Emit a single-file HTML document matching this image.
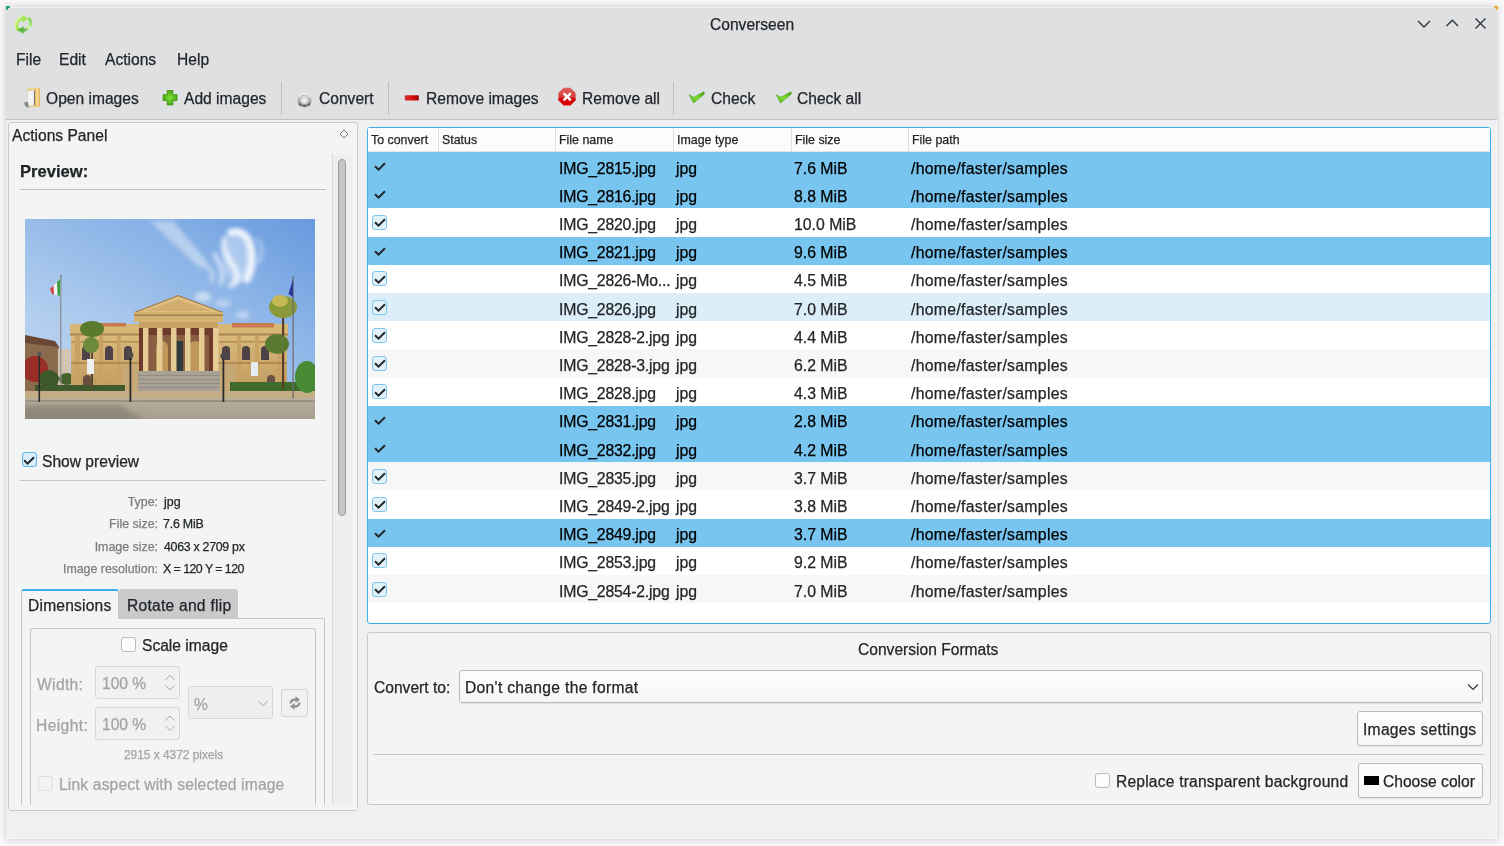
<!DOCTYPE html>
<html><head><meta charset="utf-8">
<style>
*{box-sizing:border-box;margin:0;padding:0}
html,body{width:1504px;height:846px;overflow:hidden;-webkit-font-smoothing:antialiased;-webkit-text-stroke:0.25px currentColor;background:#f8f8f8;font-family:"Liberation Sans",sans-serif;color:#232629}
.a{position:absolute;white-space:pre;line-height:1}
#win{position:absolute;left:6px;top:7px;width:1491px;height:832px;background:#eff0f1;box-shadow:0 0 6px 1px rgba(0,0,0,.15),inset -1px -1px 0 #f5f6f7}
#hdr{position:absolute;left:6px;top:7px;width:1491px;height:113px;background:#dee0e2;border-bottom:1px solid #bfc1c3;box-shadow:inset 0 1px 0 #eceef0}
.m{font-size:15.6px}
.vsep{position:absolute;width:1px;background:#bcbec0}
.frame{position:absolute;border:1px solid #c8c9cb;border-radius:3px;background:#f3f4f4}
.row{position:absolute;left:368px;width:1122px;height:28.2px}
.c{position:absolute;top:2.5px;font-size:15.8px;line-height:28.2px;white-space:pre}
.sel{background:#78c5ef}
.sel .c{color:#000}
.alt{background:#f7f7f7}
.hov{background:#dceef9}
.hc{position:absolute;top:128px;height:24px;font-size:12.4px;line-height:25px;padding-left:3px;border-right:1px solid #dfe0e1;white-space:pre}
.lbl{position:absolute;font-size:12.4px;color:#7b7d7f;text-align:right;width:140px;left:18px;line-height:1;white-space:pre}
.val{position:absolute;font-size:12.4px;left:164px;line-height:1;white-space:pre}
.dis{color:#a2a4a6}
.cbx{position:absolute;width:15px;height:15px;border:1px solid #b9bbbd;border-radius:3px;background:#fcfcfc}
.cbx.on{border-color:#5ab6ea;background:#d9eefa}

.cbx.dcb{border-color:#dcdddf;background:#f1f2f2}
.spin{position:absolute;width:85px;height:33px;border:1px solid #d6d7d9;border-radius:3px;background:#f0f1f1}
.spin span{position:absolute;left:6px;top:9px;font-size:15.6px;color:#a2a4a6;line-height:1}
.dcombo{position:absolute;width:85px;height:33px;border:1px solid #d6d7d9;border-radius:3px;background:#eeefef}
.dcombo span{position:absolute;left:5px;top:10px;font-size:15.6px;color:#a2a4a6;line-height:1}
.combo{position:absolute;border:1px solid #b9bbbd;border-radius:3px;background:linear-gradient(#fdfdfd,#f5f6f6);box-shadow:0 1px 1px rgba(0,0,0,.08)}
.combo span{position:absolute;left:5px;top:9px;font-size:15.6px;line-height:1;white-space:pre}
.btn{position:absolute;border:1px solid #b9bbbd;border-radius:3px;background:linear-gradient(#fdfdfd,#f5f6f6);box-shadow:0 1px 1px rgba(0,0,0,.08)}
.btn span{position:absolute;top:10px;font-size:15.6px;line-height:1;white-space:pre}
.cb{position:absolute;left:4px;top:6.5px;width:15px;height:15px;border:1px solid #7fc6ee;border-radius:3px;background:#e1f1fa}
.ck{position:absolute;left:4px;top:6px}
</style></head><body><div id="root" style="position:absolute;left:0;top:0;width:1504px;height:846px;will-change:transform">
<div id="win"></div>
<div id="hdr"></div>
<div style="position:absolute;left:6px;top:6px;width:4px;height:2px;background:#1c9c7c;border-radius:1px"></div>
<div style="position:absolute;left:6px;top:6px;width:2px;height:4px;background:#1c9c7c;border-radius:1px"></div>
<div style="position:absolute;left:1494px;top:6px;width:4px;height:2px;background:#e2b23a;border-radius:1px"></div>
<div style="position:absolute;left:1496px;top:6px;width:2px;height:4px;background:#e2b23a;border-radius:1px"></div>

<!-- title -->
<div class="a m" style="left:710px;top:17px">Converseen</div>
<!-- menu -->
<div class="a m" style="left:16px;top:52px">File</div>
<div class="a m" style="left:59px;top:52px">Edit</div>
<div class="a m" style="left:105px;top:52px">Actions</div>
<div class="a m" style="left:177px;top:52px">Help</div>
<!-- toolbar -->
<div class="a m" style="left:46px;top:91px">Open images</div>
<div class="a m" style="left:184px;top:91px">Add images</div>
<div class="vsep" style="left:281px;top:82px;height:33px"></div>
<div class="a m" style="left:319px;top:91px">Convert</div>
<div class="vsep" style="left:388px;top:82px;height:33px"></div>
<div class="a m" style="left:426px;top:91px">Remove images</div>
<div class="a m" style="left:582px;top:91px">Remove all</div>
<div class="vsep" style="left:673px;top:82px;height:33px"></div>
<div class="a m" style="left:711px;top:91px">Check</div>
<div class="a m" style="left:797px;top:91px">Check all</div>


<!-- icons -->
<svg class="a" style="left:12px;top:13px" width="22" height="22" viewBox="0 0 22 22">
 <defs><linearGradient id="ga" x1="0" y1="0" x2="1" y2="1"><stop offset="0" stop-color="#e4ffa0"/><stop offset=".45" stop-color="#a8ec50"/><stop offset="1" stop-color="#4ea82c"/></linearGradient>
 <linearGradient id="gb" x1="1" y1="0" x2="0" y2="1"><stop offset="0" stop-color="#78cc48"/><stop offset=".5" stop-color="#d8fcb0"/><stop offset="1" stop-color="#4a9a2a"/></linearGradient></defs>
 <path d="M7 17.5C3.5 14 3.5 8.5 8 6.2 9.2 5.6 10.2 5.4 11.5 5.4" fill="none" stroke="url(#ga)" stroke-width="3.2"/>
 <path d="M10.5 1.8 16 5.8 10.5 9.8Z" fill="#a8e858"/>
 <path d="M16.5 5C19.5 8.5 19 14 14.5 16.2 13 16.8 12 17 10.5 17" fill="none" stroke="url(#gb)" stroke-width="3.2"/>
 <path d="M11.5 13 6 17 11.5 21Z" fill="#5cb83a"/>
 <path d="M7 17.5C3.5 14 3.5 8.5 8 6.2" fill="none" stroke="#3c6a2a" stroke-opacity=".35" stroke-width=".6" transform="translate(.9 .4)"/>
</svg>
<svg class="a" style="left:22px;top:87px" width="20" height="22" viewBox="0 0 20 22">
 <defs><linearGradient id="gf" x1="0" y1="0" x2="1" y2="0"><stop offset="0" stop-color="#e9b34f"/><stop offset=".5" stop-color="#fbe0a0"/><stop offset="1" stop-color="#dba849"/></linearGradient></defs>
 <path d="M5 1.5 17.5 .8 17.5 19.5 5 20.5Z" fill="#efd08a"/>
 <path d="M5.5 4 12 3.2 12 18.5 5.5 19Z" fill="#f4f4f4" stroke="#c8c8c8" stroke-width=".5"/>
 <path d="M12 3.2 13.5 3.5 13.5 18 12 18.5Z" fill="#7a7a7a"/>
 <path d="M13 2 17.8 1 17.8 19.5 13 20.5Z" fill="url(#gf)"/>
 <path d="M2.5 15C2 17.5 3 20 6 20.5L7 20.5 6 15Z" fill="#8a8c8e"/>
</svg>
<svg class="a" style="left:162px;top:89px" width="17" height="17" viewBox="0 0 17 17">
 <defs><radialGradient id="gp" cx=".5" cy=".5" r=".6"><stop offset="0" stop-color="#80e040"/><stop offset="1" stop-color="#3d9c05"/></radialGradient></defs>
 <path d="M5.2 1.5H10.9V5.7H15V11.6H10.9V15.9H5.2V11.6H1.1V5.7H5.2Z" fill="url(#gp)" stroke="#3f8f17" stroke-width=".8" stroke-linejoin="round"/>
</svg>
<svg class="a" style="left:296px;top:92px" width="17" height="16" viewBox="0 0 17 16">
 <defs><linearGradient id="gg" x1="0" y1="0" x2="0" y2="1"><stop offset="0" stop-color="#f5f5f5"/><stop offset="1" stop-color="#6f7173"/></linearGradient></defs>
 <circle cx="8.5" cy="8" r="7.2" fill="url(#gg)"/>
 <circle cx="8.5" cy="8" r="4.6" fill="#d8d9da" stroke="#a0a2a4" stroke-width=".8"/>
 <circle cx="8.5" cy="8.3" r="2" fill="#f2f2f2"/>
 <g fill="#e9e9e9" opacity=".9"><circle cx="4" cy="4" r="1.2"/><circle cx="8.5" cy="2.2" r="1.2"/><circle cx="13" cy="4" r="1.2"/></g>
 <g fill="#606264"><circle cx="4" cy="12.5" r="1.3"/><circle cx="8.5" cy="14" r="1.3"/><circle cx="13" cy="12.5" r="1.3"/></g>
</svg>
<svg class="a" style="left:404px;top:94px" width="16" height="8" viewBox="0 0 16 8">
 <defs><linearGradient id="gm" x1="0" y1="0" x2="1" y2="0"><stop offset="0" stop-color="#c83030"/><stop offset=".5" stop-color="#e01010"/><stop offset="1" stop-color="#9a0000"/></linearGradient></defs>
 <rect x=".8" y="1.2" width="14" height="5.2" rx=".8" fill="url(#gm)"/>
</svg>
<svg class="a" style="left:557px;top:87px" width="20" height="20" viewBox="0 0 20 20">
 <defs><linearGradient id="gs" x1="0" y1="0" x2="0" y2="1"><stop offset="0" stop-color="#e06060"/><stop offset=".55" stop-color="#d43a3a"/><stop offset=".6" stop-color="#cc0000"/><stop offset="1" stop-color="#e00000"/></linearGradient></defs>
 <path d="M6.6 .8H13.4L18.6 6V13.2L13.4 18.4H6.6L1.4 13.2V6Z" fill="url(#gs)"/>
 <path d="M7.3 6.8 13.1 12.6M13.1 6.8 7.3 12.6" stroke="#fff" stroke-width="2.6" stroke-linecap="round"/>
</svg>
<svg class="a" style="left:688px;top:91px" width="18" height="14" viewBox="0 0 18 14">
 <defs><linearGradient id="gc" x1="0" y1="1" x2="1" y2="0"><stop offset="0" stop-color="#4caa10"/><stop offset=".5" stop-color="#7ee030"/><stop offset="1" stop-color="#3f9a08"/></linearGradient></defs>
 <path d="M1.2 3.8 6 6.2 15.8 .8C16.6 1.6 16.6 2.8 15.8 3.6L5.5 12 1.2 3.8Z" fill="url(#gc)" stroke="#4a9a20" stroke-width=".5"/>
</svg>
<svg class="a" style="left:775px;top:91px" width="18" height="14" viewBox="0 0 18 14">
 <path d="M1.2 3.8 6 6.2 15.8 .8C16.6 1.6 16.6 2.8 15.8 3.6L5.5 12 1.2 3.8Z" fill="url(#gc)" stroke="#4a9a20" stroke-width=".5"/>
</svg>
<!-- title buttons -->
<svg class="a" style="left:1410px;top:12px" width="84" height="24" viewBox="0 0 84 24">
 <path d="M8 9 14 15 20 9" fill="none" stroke="#31363b" stroke-width="1.4"/>
 <path d="M36.5 14 42.3 8.2 48 14" fill="none" stroke="#31363b" stroke-width="1.4"/>
 <path d="M65.5 6.5 75.5 16.5M75.5 6.5 65.5 16.5" fill="none" stroke="#31363b" stroke-width="1.4"/>
</svg>

<!-- dock -->
<div class="frame" style="left:8px;top:122px;width:350px;height:689px"></div>
<div class="a m" style="left:12px;top:128px">Actions Panel</div>

<!-- dock contents -->
<svg class="a" style="left:339px;top:129px" width="10" height="10" viewBox="0 0 10 10"><path d="M5 1 9 5 5 9 1 5Z" fill="none" stroke="#75787b" stroke-width="1"/></svg>
<div class="a" style="left:20px;top:164px;font-size:16.6px;font-weight:bold;color:#1f2225">Preview:</div>
<div style="position:absolute;left:20px;top:189px;width:306px;height:1px;background:#bfc1c3"></div>
<div id="prev" style="position:absolute;left:25px;top:219px;width:290px;height:200px;background:#7fa7dc;overflow:hidden"><svg width="290" height="200" viewBox="0 0 290 200" style="position:absolute;left:0;top:0">
<defs>
 <linearGradient id="sky" x1="0" y1="1" x2="1" y2="0">
  <stop offset="0" stop-color="#c6dbf1"/><stop offset=".4" stop-color="#a9c8ed"/><stop offset=".7" stop-color="#8cb4e7"/><stop offset="1" stop-color="#6699de"/>
 </linearGradient>
 <linearGradient id="skyt" x1="0" y1="0" x2="0" y2="1">
  <stop offset="0" stop-color="#6d9fe0" stop-opacity=".15"/><stop offset=".5" stop-color="#6d9fdd" stop-opacity="0"/>
 </linearGradient>
 <linearGradient id="bld" x1="0" y1="0" x2="0" y2="1">
  <stop offset="0" stop-color="#dcbd80"/><stop offset="1" stop-color="#c09a5e"/>
 </linearGradient>
 <linearGradient id="pave" x1="0" y1="0" x2="0" y2="1">
  <stop offset="0" stop-color="#b9ae9c"/><stop offset="1" stop-color="#a89e8e"/>
 </linearGradient>
 <filter id="bl"><feGaussianBlur stdDeviation="2.2"/></filter>
 <filter id="bl1"><feGaussianBlur stdDeviation=".7"/></filter>
 <filter id="bl3"><feGaussianBlur stdDeviation="2.3"/></filter>
 <filter id="bl2"><feGaussianBlur stdDeviation="3"/></filter>
</defs>
<rect width="290" height="200" fill="url(#sky)"/>
<rect width="290" height="200" fill="url(#skyt)"/>
<!-- clouds -->
<g filter="url(#bl3)" fill="none" stroke="#fff" stroke-linecap="round">
 <path d="M206 14 C216 10 224 18 226 30 C228 42 226 52 222 60" stroke-width="8" opacity=".85"/>
 <path d="M200 20 C196 30 204 40 210 50 C214 58 212 64 206 66" stroke-width="6" opacity=".7"/>
 <path d="M190 36 C196 46 200 56 196 64" stroke-width="5" opacity=".55"/>
 <path d="M232 20 C238 26 238 34 234 44" stroke-width="3" opacity=".45"/>
 <path d="M180 46 C186 50 190 56 186 62" stroke-width="4" opacity=".45"/>
</g>
<g filter="url(#bl)" fill="#fff">
 <path d="M125 2 L148 2 L182 42 L176 50 Z" opacity=".4"/>
 <ellipse cx="212" cy="40" rx="14" ry="24" opacity=".35"/>
 <ellipse cx="178" cy="78" rx="8" ry="5" opacity=".5"/>
 <ellipse cx="198" cy="84" rx="8" ry="4" opacity=".35"/>
 <ellipse cx="218" cy="96" rx="7" ry="4" opacity=".4"/>
</g>
<!-- left building -->
<path d="M0 118 L30 124 L34 128 L34 172 L0 172Z" fill="#8c6a4e"/>
<path d="M0 116 L30 122 L34 128 L0 124Z" fill="#6a4634"/>
<rect x="33" y="130" width="12" height="40" fill="#d2c6b2"/>
<g filter="url(#bl1)">
 <ellipse cx="10" cy="150" rx="13" ry="13" fill="#9a2e28"/>
 <ellipse cx="24" cy="160" rx="10" ry="9" fill="#3d5a2a"/>
 <ellipse cx="42" cy="160" rx="8" ry="6" fill="#47602e"/>
</g>
<!-- flag pole left + flag -->
<rect x="35.2" y="56" width="1.2" height="127" fill="#8a8a8a"/>
<path d="M25 70 L35.2 60 L35.2 77 L27 75Z" fill="#f4f4f4"/>
<path d="M32 63 L35.2 60 L35.2 77 L32.5 76.5Z" fill="#3aa04a"/>
<path d="M25 70 L28.5 66.5 L29 75.8 L27 75Z" fill="#d04040"/>
<!-- main building body -->
<rect x="46" y="110" width="216" height="62" fill="url(#bld)"/>
<rect x="45" y="105" width="70" height="11" fill="#d8b776"/>
<rect x="193" y="105" width="70" height="11" fill="#d8b776"/>
<rect x="73" y="104" width="28" height="3.5" fill="#c67a52"/>
<rect x="207" y="104" width="42" height="4.5" fill="#c97a50"/>
<rect x="45" y="114.5" width="218" height="2" fill="#a88450"/>
<rect x="46" y="122" width="216" height="1.5" fill="#b38c55"/>
<g fill="#c8a264"><rect x="50" y="117" width="5" height="54"/><rect x="74" y="117" width="4" height="54"/><rect x="92" y="117" width="4" height="54"/><rect x="212" y="117" width="4" height="54"/><rect x="230" y="117" width="4" height="54"/><rect x="252" y="117" width="5" height="54"/></g>
<!-- windows arched -->
<g fill="#4e4248">
 <path d="M57 141V131a4 4 0 0 1 8 0V141Z"/>
 <path d="M80 141V131a4 4 0 0 1 8 0V141Z"/>
 <path d="M99 141V131a4 4 0 0 1 8 0V141Z"/>
 <path d="M197 141V131a4 4 0 0 1 8 0V141Z"/>
 <path d="M217 141V131a4 4 0 0 1 8 0V141Z"/>
 <path d="M236 141V131a4 4 0 0 1 8 0V141Z"/>
</g>
<g fill="#6a5040">
 <path d="M58 170V160a4 4 0 0 1 8 0V170Z"/>
 <path d="M242 170V160a4 4 0 0 1 8 0V170Z"/>
</g>
<rect x="46" y="143" width="216" height="2" fill="#b08a52"/>
<!-- portico -->
<path d="M109.5 93.5 L153.3 76.5 L198 93.5Z" fill="#dfbf80" stroke="#9c7644" stroke-width="1.1"/>
<path d="M120 92 L153.3 80.5 L187 92Z" fill="#d2ae6e"/>
<rect x="109" y="93" width="89" height="10" fill="#d4b272"/>
<rect x="109" y="95.5" width="89" height="1.2" fill="#94704a"/>
<rect x="114" y="103" width="79" height="6" fill="#c6a266"/>
<rect x="114" y="109" width="79" height="43" fill="#6e3a2c"/>
<rect x="124" y="116" width="60" height="36" fill="#8a5e40"/>
<path d="M131 152V128a6 6 0 0 1 12 0V152Z" fill="#c0965a"/>
<path d="M164 152V128a6 6 0 0 1 12 0V152Z" fill="#c0965a"/>
<rect x="149" y="122" width="9" height="30" fill="#2e3a3c"/>
<g fill="#e4cc94">
 <rect x="118" y="109" width="5.5" height="44"/>
 <rect x="132" y="109" width="5.5" height="44"/>
 <rect x="146" y="109" width="5.5" height="44"/>
 <rect x="160" y="109" width="5.5" height="44"/>
 <rect x="174" y="109" width="5.5" height="44"/>
 <rect x="188" y="109" width="5.5" height="44"/>
</g>
<!-- stairs -->
<rect x="111" y="152" width="86" height="20" fill="#a9a196"/>
<g fill="#8f887e"><rect x="111" y="156" width="86" height=".8"/><rect x="111" y="160" width="86" height=".8"/><rect x="111" y="164" width="86" height=".8"/><rect x="111" y="168" width="86" height=".8"/></g>
<rect x="97" y="145" width="16" height="27" fill="#c6a874"/>
<rect x="195" y="145" width="16" height="27" fill="#c6a874"/>
<!-- hedges -->
<rect x="10" y="166" width="90" height="6" fill="#3f5a2c"/>
<rect x="205" y="163" width="85" height="9" fill="#3f6a2c"/>
<!-- base wall -->
<rect x="0" y="172" width="290" height="7" fill="#c4ae86"/>
<!-- pavement -->
<rect x="0" y="179" width="290" height="21" fill="url(#pave)"/>
<rect x="0" y="181.5" width="290" height="1" fill="#80786c"/>
<g filter="url(#bl2)"><path d="M-5 186 L95 186 L125 205 L-5 205Z" fill="#857d72" opacity=".75"/></g>
<!-- palms left -->
<rect x="66" y="112" width="2" height="58" fill="#5a4a30"/>
<g filter="url(#bl1)">
 <ellipse cx="67" cy="110" rx="12" ry="8" fill="#5a7a2e"/>
 <ellipse cx="66" cy="126" rx="8" ry="8" fill="#6c8a3a"/>
</g>
<rect x="36" y="56" width="1" height="3" fill="#8a8a8a"/>
<!-- lamp posts -->
<rect x="13.5" y="135" width="1.6" height="48" fill="#2a2a2a"/>
<circle cx="14.3" cy="135" r="2.2" fill="#555"/>
<rect x="104.5" y="136" width="1.8" height="47" fill="#2a2a2a"/>
<circle cx="105.4" cy="136" r="3" fill="#4a4a4a"/>
<rect x="197.5" y="137" width="1.8" height="46" fill="#2a2a2a"/>
<circle cx="198.4" cy="137" r="3" fill="#4a4a4a"/>
<!-- banners -->
<rect x="62" y="140" width="7" height="15" fill="#f0f0f0"/>
<rect x="226" y="143" width="7" height="14" fill="#e4ecf2"/>
<!-- right palms -->
<rect x="257" y="95" width="2.2" height="75" fill="#5a4028"/>
<g filter="url(#bl1)">
 <ellipse cx="258" cy="88" rx="14" ry="11" fill="#8a9a3a"/>
 <ellipse cx="255" cy="82" rx="8" ry="6" fill="#c4ba52"/>
 <ellipse cx="252" cy="125" rx="12" ry="10" fill="#5a7a30"/>
</g>
<rect x="267.5" y="57" width="1.2" height="123" fill="#6a6a6a"/>
<path d="M268 60 L263.5 75 L268 78Z" fill="#2a3a9a"/>
<g filter="url(#bl1)">
 <ellipse cx="282" cy="158" rx="12" ry="16" fill="#4a8a34"/>
</g>
</svg>
</div>
<div class="cbx on" style="left:22px;top:452px"></div><svg class="a" style="left:21px;top:452px" width="16" height="16" viewBox="0 0 16 16"><path d="M3.2 8.2 6.6 11.6 13 5.2" fill="none" stroke="#232629" stroke-width="2"/></svg>
<div class="a m" style="left:42px;top:454px">Show preview</div>
<div style="position:absolute;left:20px;top:480px;width:306px;height:1px;background:#c4c6c8"></div>
<div class="lbl" style="top:496px">Type:</div><div class="val" style="top:496px">jpg</div>
<div class="lbl" style="top:518px">File size:</div><div class="val" style="top:518px;left:163px;letter-spacing:-.2px">7.6 MiB</div>
<div class="lbl" style="top:541px">Image size:</div><div class="val" style="top:541px;letter-spacing:-.3px">4063 x 2709 px</div>
<div class="lbl" style="top:563px">Image resolution:</div><div class="val" style="top:563px;left:163px;letter-spacing:-.55px">X = 120 Y = 120</div>
<!-- scrollbar -->
<div style="position:absolute;left:332px;top:154px;width:20px;height:651px;background:#eeeff0;border-left:1px solid #d9dadb"></div>
<div style="position:absolute;left:338px;top:159px;width:8px;height:357px;border-radius:4px;background:#c5c6c7;border:1px solid #9a9c9e"></div>
<!-- tabs -->
<div style="position:absolute;left:21px;top:618px;width:304px;height:187px;border:1px solid #c4c6c8;border-bottom:0;border-radius:2px 2px 0 0"></div>
<div style="position:absolute;left:119px;top:589px;width:119px;height:29px;background:#c9cacc;border-radius:3px 3px 0 0"></div>
<div style="position:absolute;left:21px;top:589px;width:98px;height:30px;background:#f3f4f4;border:1px solid #c4c6c8;border-bottom:0;border-top:2px solid #3daee9;border-radius:3px 3px 0 0"></div>
<div class="a m" style="left:28px;top:598px;letter-spacing:.2px">Dimensions</div>
<div class="a m" style="left:127px;top:598px;letter-spacing:.25px">Rotate and flip</div>
<div style="position:absolute;left:30px;top:628px;width:286px;height:177px;border:1px solid #c4c6c8;border-bottom:0;border-radius:3px 3px 0 0"></div>
<div class="cbx" style="left:121px;top:637px"></div>
<div class="a m" style="left:142px;top:638px">Scale image</div>
<div class="a m dis" style="left:37px;top:677px;letter-spacing:.35px">Width:</div>
<div class="a m dis" style="left:36px;top:718px;letter-spacing:.4px">Height:</div>
<div class="spin" style="left:95px;top:666px"><span>100 %</span></div>
<div class="spin" style="left:95px;top:707px"><span>100 %</span></div>
<div class="dcombo" style="left:188px;top:686px"><span>%</span></div>
<div style="position:absolute;left:281px;top:689px;width:27px;height:28px;border:1px solid #d3d4d6;border-radius:3px;background:#f0f1f1"></div>
<div class="a dis" style="left:124px;top:750px;font-size:11.9px">2915 x 4372 pixels</div>
<div class="cbx dcb" style="left:38px;top:776px"></div>
<div class="a m dis" style="left:59px;top:777px;letter-spacing:.17px">Link aspect with selected image</div>

<!-- spin arrows, chevrons, swap -->
<svg class="a" style="left:160px;top:666px" width="20" height="76" viewBox="0 0 20 76">
 <g fill="none" stroke="#a6a8aa" stroke-width="1">
  <path d="M5.5 13.8 10 9.2 14.5 13.8"/><path d="M5.5 19.5 10 24 14.5 19.5"/>
  <path d="M5.5 54.5 10 50 14.5 54.5"/><path d="M5.5 60 10 64.5 14.5 60"/>
 </g>
</svg>
<svg class="a" style="left:256px;top:698px" width="14" height="10" viewBox="0 0 14 10"><path d="M2.5 3 7 7.8 11.5 3" fill="none" stroke="#a6a8aa" stroke-width="1"/></svg>
<svg class="a" style="left:287px;top:695px" width="16" height="16" viewBox="0 0 16 16">
 <g fill="#8f9193">
  <path d="M2.5 8.5C2.5 5 5 3.2 8.5 3.4L8.5 1.2 13 4.6 8.5 8 8.5 5.8C6.2 5.6 4.6 6.8 4.6 8.5Z"/>
  <path d="M13.5 7.5C13.5 11 11 12.8 7.5 12.6L7.5 14.8 3 11.4 7.5 8 7.5 10.2C9.8 10.4 11.4 9.2 11.4 7.5Z"/>
 </g>
</svg>
<!-- cover below scroll area -->
<div style="position:absolute;left:9px;top:805px;width:348px;height:5px;background:#f3f4f4"></div>


<!-- table -->
<div style="position:absolute;left:367px;top:127px;width:1124px;height:497px;border:1px solid #3daee9;border-radius:3px;background:#fff;overflow:hidden">
</div>
<div style="position:absolute;left:368px;top:128px;width:1122px;height:24px;background:#fcfcfc;border-bottom:1px solid #e3e4e5"></div>
<div class="hc" style="left:368px;width:71px">To convert</div>
<div class="hc" style="left:439px;width:117px">Status</div>
<div class="hc" style="left:556px;width:118px">File name</div>
<div class="hc" style="left:674px;width:118px">Image type</div>
<div class="hc" style="left:792px;width:117px">File size</div>
<div class="hc" style="left:909px;width:581px;border-right:0">File path</div>
<div class="row sel" style="top:152.0px"><svg class="ck" width="16" height="16" viewBox="0 0 16 16"><path d="M3 8.2 6.5 11.6 13 5.2" fill="none" stroke="#232629" stroke-width="2"/></svg><span class="c" style="left:191px;letter-spacing:-.2px">IMG_2815.jpg</span><span class="c" style="left:308px">jpg</span><span class="c" style="left:426px">7.6 MiB</span><span class="c" style="left:543px;letter-spacing:.3px">/home/faster/samples</span></div>
<div class="row sel" style="top:180.2px"><svg class="ck" width="16" height="16" viewBox="0 0 16 16"><path d="M3 8.2 6.5 11.6 13 5.2" fill="none" stroke="#232629" stroke-width="2"/></svg><span class="c" style="left:191px;letter-spacing:-.2px">IMG_2816.jpg</span><span class="c" style="left:308px">jpg</span><span class="c" style="left:426px">8.8 MiB</span><span class="c" style="left:543px;letter-spacing:.3px">/home/faster/samples</span></div>
<div class="row " style="top:208.4px"><span class="cb"></span><svg class="ck" width="16" height="16" viewBox="0 0 16 16"><path d="M3 8.2 6.5 11.6 13 5.2" fill="none" stroke="#232629" stroke-width="2"/></svg><span class="c" style="left:191px;letter-spacing:-.2px">IMG_2820.jpg</span><span class="c" style="left:308px">jpg</span><span class="c" style="left:426px">10.0 MiB</span><span class="c" style="left:543px;letter-spacing:.3px">/home/faster/samples</span></div>
<div class="row sel" style="top:236.6px"><svg class="ck" width="16" height="16" viewBox="0 0 16 16"><path d="M3 8.2 6.5 11.6 13 5.2" fill="none" stroke="#232629" stroke-width="2"/></svg><span class="c" style="left:191px;letter-spacing:-.2px">IMG_2821.jpg</span><span class="c" style="left:308px">jpg</span><span class="c" style="left:426px">9.6 MiB</span><span class="c" style="left:543px;letter-spacing:.3px">/home/faster/samples</span></div>
<div class="row " style="top:264.8px"><span class="cb"></span><svg class="ck" width="16" height="16" viewBox="0 0 16 16"><path d="M3 8.2 6.5 11.6 13 5.2" fill="none" stroke="#232629" stroke-width="2"/></svg><span class="c" style="left:191px;letter-spacing:-.2px">IMG_2826-Mo...</span><span class="c" style="left:308px">jpg</span><span class="c" style="left:426px">4.5 MiB</span><span class="c" style="left:543px;letter-spacing:.3px">/home/faster/samples</span></div>
<div class="row hov" style="top:293.0px"><span class="cb"></span><svg class="ck" width="16" height="16" viewBox="0 0 16 16"><path d="M3 8.2 6.5 11.6 13 5.2" fill="none" stroke="#232629" stroke-width="2"/></svg><span class="c" style="left:191px;letter-spacing:-.2px">IMG_2826.jpg</span><span class="c" style="left:308px">jpg</span><span class="c" style="left:426px">7.0 MiB</span><span class="c" style="left:543px;letter-spacing:.3px">/home/faster/samples</span></div>
<div class="row " style="top:321.2px"><span class="cb"></span><svg class="ck" width="16" height="16" viewBox="0 0 16 16"><path d="M3 8.2 6.5 11.6 13 5.2" fill="none" stroke="#232629" stroke-width="2"/></svg><span class="c" style="left:191px;letter-spacing:-.2px">IMG_2828-2.jpg</span><span class="c" style="left:308px">jpg</span><span class="c" style="left:426px">4.4 MiB</span><span class="c" style="left:543px;letter-spacing:.3px">/home/faster/samples</span></div>
<div class="row alt" style="top:349.4px"><span class="cb"></span><svg class="ck" width="16" height="16" viewBox="0 0 16 16"><path d="M3 8.2 6.5 11.6 13 5.2" fill="none" stroke="#232629" stroke-width="2"/></svg><span class="c" style="left:191px;letter-spacing:-.2px">IMG_2828-3.jpg</span><span class="c" style="left:308px">jpg</span><span class="c" style="left:426px">6.2 MiB</span><span class="c" style="left:543px;letter-spacing:.3px">/home/faster/samples</span></div>
<div class="row " style="top:377.6px"><span class="cb"></span><svg class="ck" width="16" height="16" viewBox="0 0 16 16"><path d="M3 8.2 6.5 11.6 13 5.2" fill="none" stroke="#232629" stroke-width="2"/></svg><span class="c" style="left:191px;letter-spacing:-.2px">IMG_2828.jpg</span><span class="c" style="left:308px">jpg</span><span class="c" style="left:426px">4.3 MiB</span><span class="c" style="left:543px;letter-spacing:.3px">/home/faster/samples</span></div>
<div class="row sel" style="top:405.8px"><svg class="ck" width="16" height="16" viewBox="0 0 16 16"><path d="M3 8.2 6.5 11.6 13 5.2" fill="none" stroke="#232629" stroke-width="2"/></svg><span class="c" style="left:191px;letter-spacing:-.2px">IMG_2831.jpg</span><span class="c" style="left:308px">jpg</span><span class="c" style="left:426px">2.8 MiB</span><span class="c" style="left:543px;letter-spacing:.3px">/home/faster/samples</span></div>
<div class="row sel" style="top:434.0px"><svg class="ck" width="16" height="16" viewBox="0 0 16 16"><path d="M3 8.2 6.5 11.6 13 5.2" fill="none" stroke="#232629" stroke-width="2"/></svg><span class="c" style="left:191px;letter-spacing:-.2px">IMG_2832.jpg</span><span class="c" style="left:308px">jpg</span><span class="c" style="left:426px">4.2 MiB</span><span class="c" style="left:543px;letter-spacing:.3px">/home/faster/samples</span></div>
<div class="row alt" style="top:462.2px"><span class="cb"></span><svg class="ck" width="16" height="16" viewBox="0 0 16 16"><path d="M3 8.2 6.5 11.6 13 5.2" fill="none" stroke="#232629" stroke-width="2"/></svg><span class="c" style="left:191px;letter-spacing:-.2px">IMG_2835.jpg</span><span class="c" style="left:308px">jpg</span><span class="c" style="left:426px">3.7 MiB</span><span class="c" style="left:543px;letter-spacing:.3px">/home/faster/samples</span></div>
<div class="row " style="top:490.4px"><span class="cb"></span><svg class="ck" width="16" height="16" viewBox="0 0 16 16"><path d="M3 8.2 6.5 11.6 13 5.2" fill="none" stroke="#232629" stroke-width="2"/></svg><span class="c" style="left:191px;letter-spacing:-.2px">IMG_2849-2.jpg</span><span class="c" style="left:308px">jpg</span><span class="c" style="left:426px">3.8 MiB</span><span class="c" style="left:543px;letter-spacing:.3px">/home/faster/samples</span></div>
<div class="row sel" style="top:518.6px"><svg class="ck" width="16" height="16" viewBox="0 0 16 16"><path d="M3 8.2 6.5 11.6 13 5.2" fill="none" stroke="#232629" stroke-width="2"/></svg><span class="c" style="left:191px;letter-spacing:-.2px">IMG_2849.jpg</span><span class="c" style="left:308px">jpg</span><span class="c" style="left:426px">3.7 MiB</span><span class="c" style="left:543px;letter-spacing:.3px">/home/faster/samples</span></div>
<div class="row " style="top:546.8px"><span class="cb"></span><svg class="ck" width="16" height="16" viewBox="0 0 16 16"><path d="M3 8.2 6.5 11.6 13 5.2" fill="none" stroke="#232629" stroke-width="2"/></svg><span class="c" style="left:191px;letter-spacing:-.2px">IMG_2853.jpg</span><span class="c" style="left:308px">jpg</span><span class="c" style="left:426px">9.2 MiB</span><span class="c" style="left:543px;letter-spacing:.3px">/home/faster/samples</span></div>
<div class="row alt" style="top:575.0px"><span class="cb"></span><svg class="ck" width="16" height="16" viewBox="0 0 16 16"><path d="M3 8.2 6.5 11.6 13 5.2" fill="none" stroke="#232629" stroke-width="2"/></svg><span class="c" style="left:191px;letter-spacing:-.2px">IMG_2854-2.jpg</span><span class="c" style="left:308px">jpg</span><span class="c" style="left:426px">7.0 MiB</span><span class="c" style="left:543px;letter-spacing:.3px">/home/faster/samples</span></div>

<!-- conversion group -->
<div class="frame" style="left:367px;top:632px;width:1124px;height:173px"></div>

<!-- conversion contents -->
<div class="a m" style="left:858px;top:642px">Conversion Formats</div>
<div class="a m" style="left:374px;top:680px">Convert to:</div>
<div class="combo" style="left:459px;top:670px;width:1024px;height:33px"><span style="letter-spacing:.33px">Don't change the format</span></div>
<div class="btn" style="left:1357px;top:711px;width:126px;height:35px"><span style="left:5px;letter-spacing:.28px">Images settings</span></div>
<div style="position:absolute;left:373px;top:754px;width:1111px;height:1px;background:#c4c6c8"></div>
<div class="cbx" style="left:1095px;top:773px"></div>
<div class="a m" style="left:1116px;top:774px;letter-spacing:.2px">Replace transparent background</div>
<div class="btn" style="left:1358px;top:763px;width:125px;height:35px"><span style="left:24px">Choose color</span></div>
<div style="position:absolute;left:1364px;top:776px;width:15px;height:9px;background:#000"></div>
<svg class="a" style="left:1464px;top:678px" width="18" height="18" viewBox="0 0 18 18"><path d="M4 6.5 9 11.5 14 6.5" fill="none" stroke="#31363b" stroke-width="1.2"/></svg>
</div></body></html>
